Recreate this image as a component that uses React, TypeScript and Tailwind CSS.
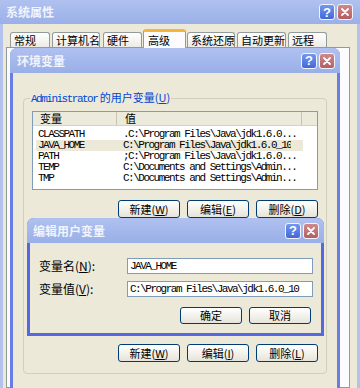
import React from 'react'

const cjk = "font-['Noto_Sans_CJK_SC','Liberation_Sans',sans-serif]"
const mono = "font-['Liberation_Mono','DejaVu_Sans_Mono',monospace] text-[11px] tracking-[-1.5px]"

function HelpButton() {
    return (
        <div className="flex h-4 w-4 items-center justify-center rounded-[3px] border border-[#f2f5fd] bg-linear-to-b from-[#7398ef] to-[#4467d8]">
            <span className="font-['Liberation_Sans',sans-serif] text-[13px] font-bold leading-none text-white">?</span>
        </div>
    )
}

function CloseButton() {
    return (
        <div className="flex h-4 w-4 items-center justify-center rounded-[3px] border border-[#f2f5fd] bg-linear-to-b from-[#cf8a8a] to-[#b35e62]">
            <svg width="10" height="10" viewBox="0 0 10 10">
                <path d="M2 2L8 8M8 2L2 8" stroke="white" strokeWidth="1.8" strokeLinecap="round" />
            </svg>
        </div>
    )
}

function TitleBar({ title, className }: { title: string; className: string }) {
    return (
        <div className={`flex shrink-0 items-center justify-between ${className}`}>
            <span className="text-[12px] font-bold leading-none text-[#f0f4fc]">{title}</span>
            <div className="flex gap-[2px]">
                <HelpButton />
                <CloseButton />
            </div>
        </div>
    )
}

function XPButton({ label, hot, className }: { label: string; hot: string; className: string }) {
    return (
        <div className={`flex w-[62px] items-center justify-center whitespace-nowrap rounded-[3px] border border-[#003c74] bg-linear-to-b from-white to-[#e6e4da] text-[11px] leading-none text-black ${className}`}>
            {label}(<u>{hot}</u>)
        </div>
    )
}

const tabs = [
    { name: '常规', cls: 'w-[40px]' },
    { name: '计算机名', cls: 'ml-[2px] w-[48px]' },
    { name: '硬件', cls: 'ml-[3px] w-[39px]' },
    { name: '高级', cls: 'ml-[1px] w-[43px]', active: true },
    { name: '系统还原', cls: 'ml-[1px] w-[48px]' },
    { name: '自动更新', cls: 'ml-[2px] w-[49px]' },
    { name: '远程', cls: 'ml-[2px] w-[39px]' },
]

const vars = [
    { name: 'CLASSPATH', value: '.C:\\Program Files\\Java\\jdk1.6.0...' },
    { name: 'JAVA_HOME', value: 'C:\\Program Files\\Java\\jdk1.6.0_10', selected: true },
    { name: 'PATH', value: ';C:\\Program Files\\Java\\jdk1.6.0...' },
    { name: 'TEMP', value: 'C:\\Documents and Settings\\Admin...' },
    { name: 'TMP', value: 'C:\\Documents and Settings\\Admin...' },
]

export default function App() {
    return (
        <div className={`relative h-[388px] w-[360px] overflow-hidden bg-[#ece9d8] ${cjk}`}>
            {/* 系统属性 */}
            <div className="flex h-full flex-col">
                <TitleBar title="系统属性" className="h-[24px] bg-linear-to-b from-[#b0c1f0] to-[#9bb0e8] pl-[6px] pr-[7px]" />
                <div className="flex flex-1 flex-col border-x-[3px] border-[#b3c2ec]">
                    <div className="flex h-[23px] items-end pl-[7px]">
                        {tabs.map((t) =>
                            t.active ? (
                                <div
                                    key={t.name}
                                    className={`relative z-10 mb-[-1px] flex h-[19px] items-center whitespace-nowrap rounded-t-[3px] border-x border-t-[3px] border-x-[#919b9c] border-t-[#f5b53a] bg-[#fcfcfe] pl-[4px] text-[11px] leading-none text-black ${t.cls}`}
                                >
                                    {t.name}
                                </div>
                            ) : (
                                <div
                                    key={t.name}
                                    className={`flex h-[15px] items-center whitespace-nowrap rounded-t-[3px] border-x border-t border-[#919b9c] bg-linear-to-b from-white to-[#ecebe6] pl-[3px] text-[11px] leading-none text-black ${t.cls}`}
                                >
                                    {t.name}
                                </div>
                            )
                        )}
                    </div>
                    <div className="ml-[3px] mr-[7px] flex-1 border border-[#919b9c] bg-[#fcfcfe]" />
                </div>
            </div>

            {/* 环境变量 */}
            <div className="absolute left-[10px] top-[48px] flex h-[345px] w-[330px] flex-col overflow-hidden rounded-t-[7px] bg-[#6a7de4]">
                <TitleBar title="环境变量" className="h-[25px] bg-linear-to-b from-[#b0c1f0] to-[#99afe8] pl-[7px] pr-[5px]" />
                <div className="mx-[3px] flex-1 bg-[#ece9d8] px-[10px] pt-[18px]">
                    <fieldset className="rounded-[4px] border border-[#d0d0bf] px-[8px] pb-[11px]">
                        <legend className="ml-[-2px] px-[1px] text-[11px] leading-[12px] text-[#0046d5]">
                            <span className={mono}>Administrator</span> 的用户变量(<u>U</u>)
                        </legend>
                        <div className="mt-[6px] h-[79px] border border-[#7f9db9] bg-white">
                            <div className="flex h-[14px] items-center border-b border-[#d6d2c2] bg-[#ebeadb] text-[11px] leading-none text-black">
                                <div className="flex h-full w-[84px] items-center border-r border-[#c7c5b2] pl-[7px]">变量</div>
                                <div className="flex h-full w-[185px] items-center border-r border-[#c7c5b2] pl-[8px]">值</div>
                            </div>
                            <div className="pt-[3px]">
                                {vars.map((v) => (
                                    <div
                                        key={v.name}
                                        className={`ml-[3px] flex h-[11px] w-[267px] items-center whitespace-nowrap leading-[11px] text-black ${mono} ${v.selected ? 'bg-[#ece9d8]' : ''}`}
                                    >
                                        <div className="w-[81px] pl-[2px]">{v.name}</div>
                                        <div className="overflow-hidden pl-[6px]">{v.value}</div>
                                    </div>
                                ))}
                            </div>
                        </div>
                        <div className="mt-[10px] flex justify-end gap-[7px]">
                            <XPButton label="新建" hot="W" className="h-[18px]" />
                            <XPButton label="编辑" hot="E" className="h-[18px]" />
                            <XPButton label="删除" hot="D" className="h-[18px]" />
                        </div>
                        <div className="mt-[126px] flex justify-end gap-[7px]">
                            <XPButton label="新建" hot="W" className="h-[18px]" />
                            <XPButton label="编辑" hot="I" className="h-[18px]" />
                            <XPButton label="删除" hot="L" className="h-[18px]" />
                        </div>
                    </fieldset>
                </div>
            </div>

            {/* 编辑用户变量 */}
            <div className="absolute left-[27px] top-[218px] flex h-[118px] w-[297px] flex-col overflow-hidden rounded-t-[7px] bg-[#5568e2]">
                <TitleBar title="编辑用户变量" className="h-[25px] bg-linear-to-b from-[#b0c1f0] to-[#99afe8] pl-[6px] pr-[5px]" />
                <div className="mx-[3px] mb-[3px] flex-1 bg-[#ece9d8] pl-[9px] pr-[8px] pt-[15px] text-black">
                    <div className="flex h-[16px] items-center">
                        <span className="text-[12px] leading-none">变量名(<u>N</u>):</span>
                        <div className={`ml-auto h-[16px] w-[186px] border border-[#7f9db9] bg-white pl-[2px] leading-[14px] ${mono}`}>JAVA_HOME</div>
                    </div>
                    <div className="mt-[7px] flex h-[16px] items-center">
                        <span className="text-[12px] leading-none">变量值(<u>V</u>):</span>
                        <div className={`ml-auto h-[16px] w-[186px] whitespace-nowrap border border-[#7f9db9] bg-white pl-[2px] leading-[14px] ${mono}`}>
                            C:\Program Files\Java\jdk1.6.0_10
                        </div>
                    </div>
                    <div className="mt-[10px] flex justify-end gap-[7px] pr-[2px]">
                        <div className="flex h-[17px] w-[62px] items-center justify-center rounded-[3px] border border-[#003c74] bg-linear-to-b from-white to-[#e6e4da] text-[11px] leading-none">确定</div>
                        <div className="flex h-[17px] w-[62px] items-center justify-center rounded-[3px] border border-[#003c74] bg-linear-to-b from-white to-[#e6e4da] text-[11px] leading-none">取消</div>
                    </div>
                </div>
            </div>
        </div>
    )
}
